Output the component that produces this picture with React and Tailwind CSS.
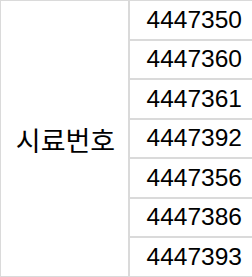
export default function App() {
  const nums = ["4447350", "4447360", "4447361", "4447392", "4447356", "4447386", "4447393"];
  const heights = ["h-[38px]", "h-[37px]", "h-[38px]", "h-[37px]", "h-[38px]", "h-[37px]", "h-[38px]"];
  return (
    <div className="w-[252px] h-[277px] bg-[#dadada] pl-px pt-px pb-px flex gap-[2px] overflow-hidden">
      <div className="w-[127px] bg-white flex items-center justify-center pt-[1px] pl-[2px]">
        <span className="text-[27px] text-black leading-none" style={{ fontFamily: '"Noto Sans CJK KR", sans-serif' }}>
          시료번호
        </span>
      </div>
      <div className="flex-1 flex flex-col gap-[2px]">
        {nums.map((n, i) => (
          <div
            key={n}
            className={`${heights[i]} bg-white flex items-center justify-end pr-[10px] text-[24.5px] text-black leading-none`}
            style={{ fontFamily: '"Liberation Sans", Arial, sans-serif' }}
          >
            {n}
          </div>
        ))}
      </div>
    </div>
  );
}
